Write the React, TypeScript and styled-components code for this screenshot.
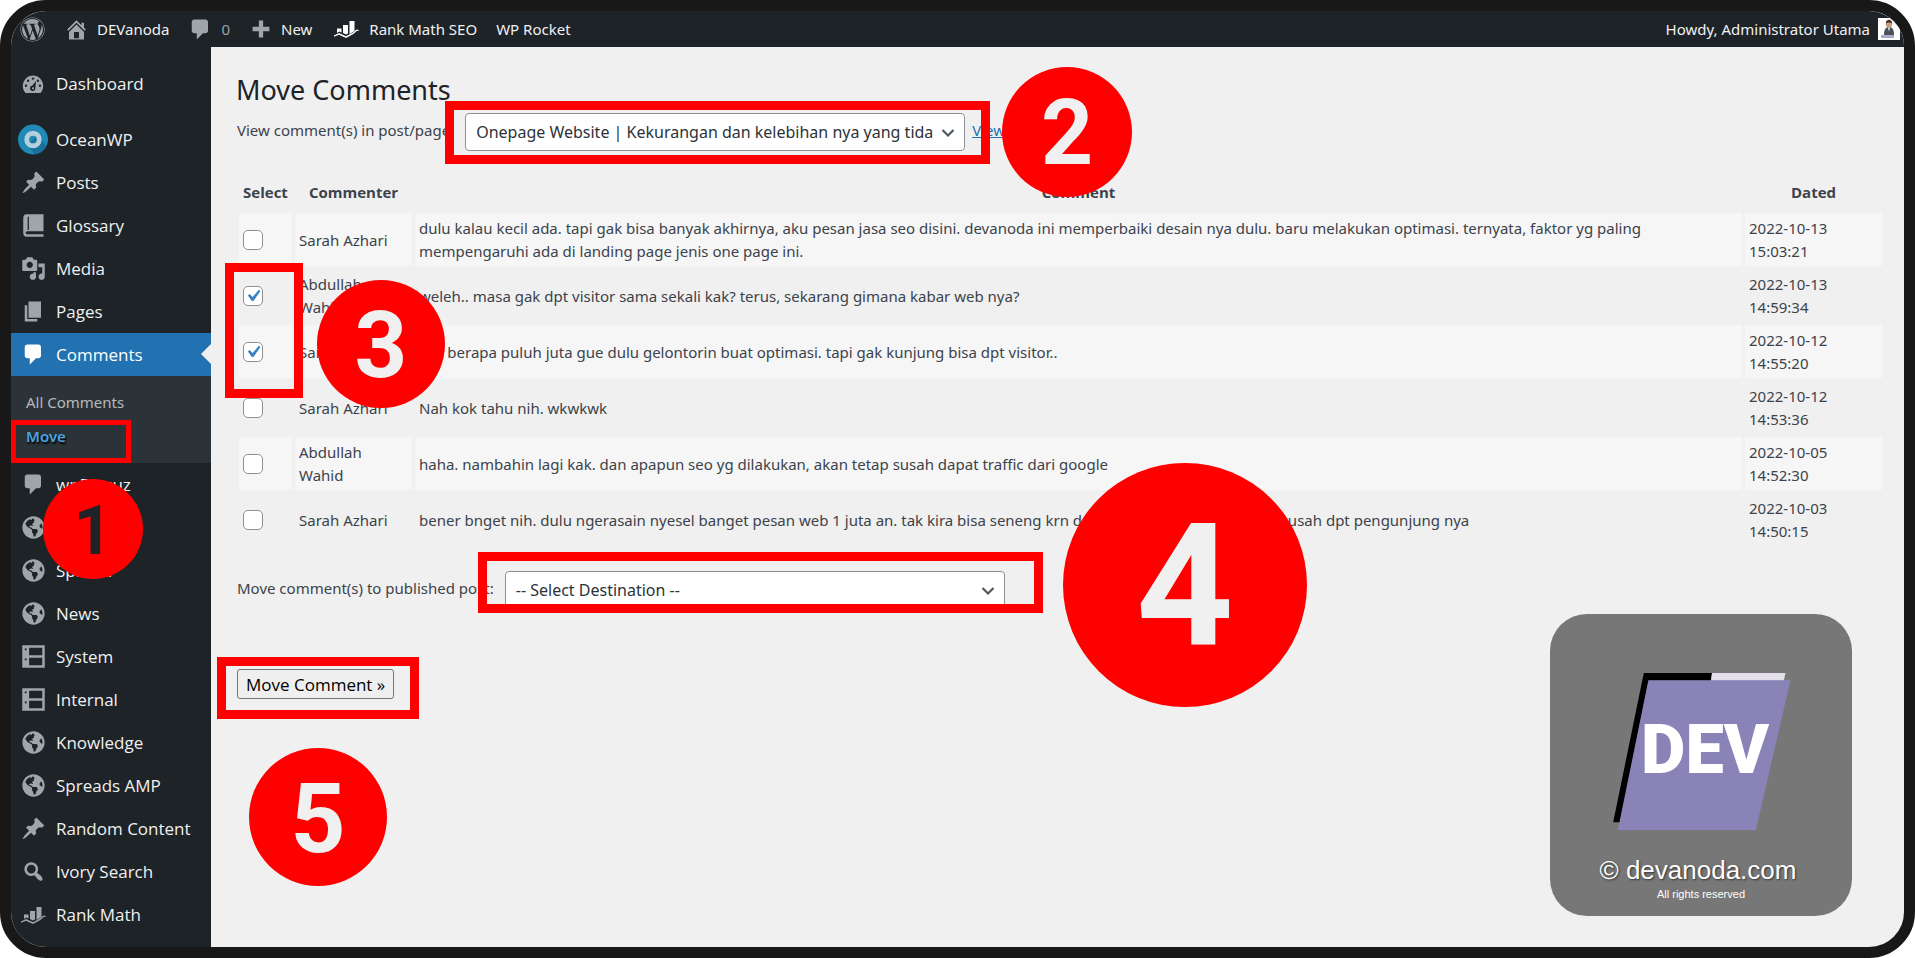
import React, { useState, type ReactNode } from 'react';
import styled, { createGlobalStyle, css } from 'styled-components';
import { FaGlobeAmericas, FaWordpress } from 'react-icons/fa';

const red = '#fe0000';
const ink = '#1d2327';
const canvas = '#f0f0f1';

const GlobalStyle = createGlobalStyle`
  *, *::before, *::after { box-sizing: border-box; }
  body {
    margin: 0;
    background: #fff;
    color: #3c434a;
    font: 15px/23px 'Noto Sans', 'Open Sans', sans-serif;
  }
  h1, p, ul { margin: 0; padding: 0; }
  ul { list-style: none; }
  a { text-decoration: none; color: inherit; }
`;

/* ---------- frame and regions ---------- */

const Frame = styled.div`
  display: flex;
  flex-direction: column;
  min-height: 100vh;
  border: 11px solid #181818;
  border-radius: 46px;
  overflow: hidden;
  background: ${canvas};
`;

const AdminBar = styled.header`
  display: flex;
  align-items: center;
  justify-content: space-between;
  height: 36px;
  padding: 0 4px 0 9px;
  background: ${ink};
  color: #f0f0f1;
`;

const BarGroup = styled.nav`
  display: flex;
  align-items: center;
  gap: 19px;
`;

const BarLink = styled.a<{ $dim?: boolean }>`
  display: flex;
  align-items: center;
  gap: 8px;
  white-space: nowrap;
  color: ${(p) => (p.$dim ? '#9ca2a7' : '#f0f0f1')};
`;

const BarIcon = styled.span`
  display: flex;
  color: #a0a5aa;
`;

const Body = styled.div`
  display: flex;
  flex: 1;
`;

const Sidebar = styled.nav`
  flex: 0 0 200px;
  padding-top: 15px;
  background: ${ink};
`;

const MenuItem = styled.li<{ $spaced?: boolean }>`
  margin-bottom: ${(p) => (p.$spaced ? '13px' : '0')};
`;

const MenuLink = styled.a<{ $current?: boolean }>`
  position: relative;
  display: flex;
  align-items: center;
  height: 43px;
  padding-left: 7px;
  gap: 8px;
  color: ${(p) => (p.$current ? '#fff' : '#f0f0f1')};
  font-family: 'Open Sans', 'Noto Sans', sans-serif;
  font-size: 17px;
  ${(p) =>
    p.$current &&
    css`
      background: #2271b1;
      &::after {
        content: '';
        position: absolute;
        right: 0;
        top: 11px;
        border: 10px solid transparent;
        border-left-width: 0;
        border-right-color: ${canvas};
      }
    `}
`;

const IconSlot = styled.span<{ $bright?: boolean }>`
  display: flex;
  align-items: center;
  justify-content: center;
  width: 30px;
  color: ${(p) => (p.$bright ? '#fff' : '#a0a5aa')};
`;

const Submenu = styled.ul`
  padding: 9px 0 10px;
  background: #2c3338;
`;

const SubItem = styled.li`
  position: relative;
`;

const SubLink = styled.a<{ $current?: boolean }>`
  display: block;
  height: 34px;
  padding-left: 15px;
  line-height: 34px;
  color: ${(p) => (p.$current ? '#4aa3e0' : '#b5babf')};
  font-weight: ${(p) => (p.$current ? 600 : 400)};
  text-shadow: ${(p) => (p.$current ? '1px 2px 2px #000' : 'none')};
`;

const Main = styled.main`
  position: relative;
  flex: 1;
  min-width: 0;
  padding: 25px 19px 40px 25px;
`;

/* ---------- page content ---------- */

const Title = styled.h1`
  margin-bottom: 5px;
  color: ${ink};
  font-size: 27px;
  font-weight: 400;
  line-height: 36px;
`;

const FieldRow = styled.div<{ $top?: number }>`
  display: flex;
  align-items: center;
  gap: 11px;
  margin-top: ${(p) => p.$top ?? 0}px;
`;

const FieldLabel = styled.label`
  padding: 0 0 3px 1px;
`;

const Anchor = styled.div`
  position: relative;
  width: fit-content;
`;

const Select = styled.select`
  display: block;
  width: 500px;
  height: 38px;
  padding: 0 30px 0 10px;
  border: 1px solid #8c8f94;
  border-radius: 4px;
  background: #fff;
  color: #2c3338;
  font: 16px 'Noto Sans', 'Open Sans', sans-serif;
  appearance: none;
`;

const Chevron = styled.svg`
  position: absolute;
  right: 9px;
  top: 12px;
  width: 16px;
  height: 16px;
  pointer-events: none;
`;

const TextLink = styled.a`
  padding-bottom: 3px;
  margin-left: -4px;
  color: #2271b1;
  text-decoration: underline;
`;

const Table = styled.table`
  width: 100%;
  margin-top: 20px;
  border-spacing: 3px;
  table-layout: fixed;
`;

const HeadCell = styled.th<{ $width?: number }>`
  width: ${(p) => (p.$width ? `${p.$width}px` : 'auto')};
  height: 36px;
  padding: 0 4px;
  font-family: 'Open Sans', 'Noto Sans', sans-serif;
  font-weight: 700;
`;

const Row = styled.tr`
  &:nth-child(odd) > td { background: #f6f6f7; }
`;

const Cell = styled.td`
  position: relative;
  height: 53px;
  padding: 4px 4px 3px;
  vertical-align: middle;
`;

const Checkbox = styled.input`
  display: block;
  width: 20px;
  height: 20px;
  margin: 0;
  border: 1px solid #8c8f94;
  border-radius: 5px;
  background: #fff center / 24px no-repeat;
  appearance: none;
  &:checked {
    background-image: url("data:image/svg+xml;utf8,<svg xmlns='http://www.w3.org/2000/svg' viewBox='0 0 20 20'><path d='M14.83 4.89l1.34.94-5.81 8.38H9.02L5.78 9.67l1.34-1.25 2.57 2.4z' fill='%233582c4'/></svg>");
  }
`;

const SubmitArea = styled(Anchor)`
  margin-top: 60px;
`;

const Submit = styled.button`
  display: block;
  height: 30px;
  margin-left: 1px;
  padding: 0 8px;
  border: 1px solid #767676;
  border-radius: 3px;
  background: #efefef;
  color: #000;
  font: 17px 'Open Sans', 'Noto Sans', sans-serif;
  white-space: nowrap;
`;

/* ---------- tutorial marks ---------- */

interface Place {
  $x: number;
  $y: number;
}

const Ring = styled.span<Place & { $w: number; $h: number; $line?: number }>`
  position: absolute;
  z-index: 2;
  left: ${(p) => p.$x}px;
  top: ${(p) => p.$y}px;
  width: ${(p) => p.$w}px;
  height: ${(p) => p.$h}px;
  border: ${(p) => p.$line ?? 9}px solid ${red};
  pointer-events: none;
`;

const Step = styled.span<Place & { $size: number; $text: number; $ink?: string }>`
  position: absolute;
  z-index: 3;
  left: ${(p) => p.$x}px;
  top: ${(p) => p.$y}px;
  display: flex;
  align-items: center;
  justify-content: center;
  width: ${(p) => p.$size}px;
  height: ${(p) => p.$size}px;
  padding-top: 3px;
  border-radius: 50%;
  background: ${red};
  color: ${(p) => p.$ink ?? canvas};
  font: 700 ${(p) => p.$text}px/1 Roboto, sans-serif;
  pointer-events: none;
`;

/* ---------- copyright card ---------- */

const Card = styled.aside`
  position: absolute;
  right: 52px;
  bottom: 31px;
  display: flex;
  flex-direction: column;
  align-items: center;
  width: 302px;
  height: 302px;
  padding-top: 59px;
  border-radius: 37px;
  background: #777;
  color: #fff;
  font-family: 'Liberation Sans', sans-serif;
`;

const Emblem = styled.svg`
  width: 178px;
  height: 157px;
  margin: 0 0 26px 2px;
`;

const Owner = styled.p`
  padding-right: 6px;
  font-size: 26px;
  line-height: 28px;
  text-shadow: 1px 1px 2px #333;
`;

const Rights = styled.p`
  font-size: 11px;
  line-height: 20px;
`;

/* ---------- icons ---------- */

const Glyph = ({ size = 25, children }: { size?: number; children: ReactNode }) => (
  <svg width={size} height={size} viewBox="0 0 20 20" fill="currentColor" aria-hidden="true">
    {children}
  </svg>
);

const DashboardIcon = () => (
  <Glyph size={24}>
    <path d="M3.8 17.5h12.4c1.5-1.6 2.3-3.6 2.3-5.8C18.500 7 14.700 3 10 3s-8.500 4-8.500 8.700c0 2.200.8 4.200 2.300 5.800z" />
    <g fill={ink}>
      <circle cx="10" cy="5.500" r="1" />
      <circle cx="5.900" cy="7.300" r="1" />
      <circle cx="14.100" cy="7.300" r="1" />
      <circle cx="4.200" cy="11.500" r="1" />
      <circle cx="15.800" cy="11.500" r="1" />
      <path d="M12.600 7.600L11.900 13.400a2.200 2.200 0 1 1-2.600-1.900z" />
    </g>
    <circle cx="10" cy="13.600" r="0.900" />
  </Glyph>
);

const OceanIcon = () => (
  <svg width="31" height="31" viewBox="0 0 31 31" aria-hidden="true">
    <circle cx="15.500" cy="15.500" r="15.500" fill="#2089b5" />
    <path d="M21 10l8 12a15.500 15.500 0 0 1-12 9l-7-10z" fill="#19709a" />
    <circle cx="15.500" cy="15.500" r="6.500" fill="none" stroke="#b3cfdc" strokeWidth="5" />
  </svg>
);

const PinIcon = () => (
  <Glyph>
    <path d="M10.440 3.020l1.820-1.820 6.360 6.350-1.830 1.820c-1.050-.68-2.480-.57-3.410.36l-.75.75c-.92.93-1.040 2.350-.35 3.410l-1.830 1.820-2.410-2.410-2.800 2.790c-.42.42-3.380 2.710-3.800 2.290s1.860-3.390 2.280-3.810l2.790-2.790L4.100 9.360l1.830-1.820c1.050.69 2.480.57 3.400-.36l.75-.75c.93-.92 1.050-2.350.36-3.410z" />
  </Glyph>
);

const BookIcon = () => (
  <Glyph>
    <path fillRule="evenodd" d="M4.500 1H18v13.500H5a1.200 1.200 0 0 0 0 2.500h13v2H4.500A3 3 0 0 1 1.800 16V4a3 3 0 0 1 2.700-3zM5.300 3v10.500h1V3z" />
  </Glyph>
);

const MediaIcon = () => (
  <Glyph>
    <path d="M13 11V4c0-.55-.45-1-1-1h-1.670L9 1H5L3.670 3H2c-.55 0-1 .45-1 1v7c0 .55.45 1 1 1h10c.55 0 1-.45 1-1zM7 4.500c1.380 0 2.500 1.120 2.500 2.500S8.380 9.500 7 9.500 4.500 8.380 4.500 7 5.620 4.500 7 4.500zM14 6h5v10.500c0 1.380-1.120 2.500-2.500 2.500S14 17.880 14 16.500s1.120-2.500 2.500-2.500c.17 0 .34.02.5.05V9h-3V6zm-4 8.050V13h2v3.500c0 1.380-1.120 2.500-2.500 2.500S7 17.880 7 16.500 8.120 14 9.500 14c.17 0 .34.02.5.05z" />
  </Glyph>
);

const PagesIcon = () => (
  <Glyph>
    <path d="M6 15V2h10v13H6zm-1 1h8v2H3V5h2v11z" />
  </Glyph>
);

const CommentIcon = () => (
  <Glyph>
    <path d="M5 2h9c1.100 0 2 .9 2 2v7c0 1.100-.9 2-2 2h-2l-5 5v-5H5c-1.100 0-2-.9-2-2V4c0-1.100.9-2 2-2z" />
  </Glyph>
);

const HomeIcon = () => (
  <Glyph>
    <path d="M16 8.500l1.530 1.530-1.060 1.060L10 4.600l-6.470 6.490-1.060-1.060L10 2.500l4 4v-2h2v4zm-6-2.460l6 5.990V18H4v-5.970zM12 17v-5H8v5h4z" />
  </Glyph>
);

const PlusIcon = () => (
  <Glyph size={24}>
    <path d="M8.200 3h3.600v5.200H17v3.600h-5.200V17H8.200v-5.200H3V8.200h5.200z" />
  </Glyph>
);

const ListIcon = () => (
  <Glyph>
    <path fillRule="evenodd" d="M1 1h18v18H1zM6.500 3v6H17V3zM6.500 11v6H17v-6zM3 3.500V5h1.500V3.500zM3 11.500V13h1.500v-1.500z" />
  </Glyph>
);

const SearchIcon = () => (
  <Glyph>
    <path d="M12.140 4.180c1.870 1.870 2.110 4.750.72 6.890.12.1.22.21.36.31.2.16.47.36.81.59.34.24.56.39.66.47.42.31.73.57.94.78.32.32.6.65.84 1 .25.35.44.69.59 1.040.14.35.21.68.18 1-.02.32-.14.59-.36.81s-.49.34-.81.36c-.31.02-.65-.04-.99-.19-.35-.14-.7-.34-1.040-.59-.35-.24-.68-.52-1-.84-.21-.21-.47-.52-.77-.93-.1-.13-.25-.35-.47-.66-.22-.32-.4-.57-.56-.78-.16-.2-.29-.35-.44-.5-2.070 1.090-4.690.76-6.440-.98-2.140-2.150-2.140-5.640 0-7.780 2.150-2.150 5.630-2.150 7.780 0zm-1.410 6.360c1.360-1.370 1.360-3.580 0-4.950-1.370-1.370-3.590-1.370-4.950 0-1.370 1.370-1.370 3.580 0 4.950 1.360 1.370 3.580 1.370 4.950 0z" />
  </Glyph>
);

const RankIcon = () => (
  <svg width="25" height="18" viewBox="0 0 25 18" fill="currentColor" aria-hidden="true">
    <path d="M3 8.500h4.500v4L5.200 11.500 3 13zM9 5h5v8.500l-2 1L9 13zM15.500 1h5v10l-5 3z" />
    <path d="M0 15.500l5-2.500 7 3.200 7-3.700 3.500-3 2.500.5-.9 1-1.100-.2-3.600 3.300L12 18l-7-3.200-5 2z" />
  </svg>
);

const GlobeIcon = () => <FaGlobeAmericas size={23} aria-hidden="true" />;

const Avatar = () => (
  <svg width="22" height="22" viewBox="0 0 22 22" role="img" aria-label="Administrator Utama">
    <rect width="22" height="22" fill="#fff" />
    <path d="M6 17c0-6 2-8 5-8s5 2 5 8z" fill="#4c5058" />
    <circle cx="11" cy="6" r="3.200" fill="#c79a82" />
    <path d="M7.800 5.500c0-5 6.400-5 6.400 0-2-1.500-4-1.500-6.400 0z" fill="#4a2c20" />
    <path d="M10 9.500h2l-1 4z" fill="#fff" />
    <rect x="3" y="17" width="13" height="3" fill="#a9acc6" />
  </svg>
);

/* ---------- data ---------- */

interface MenuEntry {
  label: string;
  icon: ReactNode;
  spaced?: boolean;
  current?: boolean;
}

const menu: MenuEntry[] = [
  { label: 'Dashboard', icon: <DashboardIcon />, spaced: true },
  { label: 'OceanWP', icon: <OceanIcon /> },
  { label: 'Posts', icon: <PinIcon /> },
  { label: 'Glossary', icon: <BookIcon /> },
  { label: 'Media', icon: <MediaIcon /> },
  { label: 'Pages', icon: <PagesIcon /> },
  { label: 'Comments', icon: <CommentIcon />, current: true },
  { label: 'wpDiscuz', icon: <CommentIcon /> },
  { label: 'Iklan', icon: <GlobeIcon /> },
  { label: 'Spread', icon: <GlobeIcon /> },
  { label: 'News', icon: <GlobeIcon /> },
  { label: 'System', icon: <ListIcon /> },
  { label: 'Internal', icon: <ListIcon /> },
  { label: 'Knowledge', icon: <GlobeIcon /> },
  { label: 'Spreads AMP', icon: <GlobeIcon /> },
  { label: 'Random Content', icon: <PinIcon /> },
  { label: 'Ivory Search', icon: <SearchIcon /> },
  { label: 'Rank Math', icon: <RankIcon /> },
];

const comments = [
  {
    by: 'Sarah Azhari',
    text: 'dulu kalau kecil ada. tapi gak bisa banyak akhirnya, aku pesan jasa seo disini. devanoda ini memperbaiki desain nya dulu. baru melakukan optimasi. ternyata, faktor yg paling mempengaruhi ada di landing page jenis one page ini.',
    date: '2022-10-13 15:03:21',
    picked: false,
  },
  {
    by: 'Abdullah Wahid',
    text: 'weleh.. masa gak dpt visitor sama sekali kak? terus, sekarang gimana kabar web nya?',
    date: '2022-10-13 14:59:34',
    picked: true,
  },
  {
    by: 'Sarah Azhari',
    text: 'kak berapa puluh juta gue dulu gelontorin buat optimasi. tapi gak kunjung bisa dpt visitor..',
    date: '2022-10-12 14:55:20',
    picked: true,
  },
  { by: 'Sarah Azhari', text: 'Nah kok tahu nih. wkwkwk', date: '2022-10-12 14:53:36', picked: false },
  {
    by: 'Abdullah Wahid',
    text: 'haha. nambahin lagi kak. dan apapun seo yg dilakukan, akan tetap susah dapat traffic dari google',
    date: '2022-10-05 14:52:30',
    picked: false,
  },
  {
    by: 'Sarah Azhari',
    text: 'bener bnget nih. dulu ngerasain nyesel banget pesan web 1 juta an. tak kira bisa seneng krn dapet harga murah, ternyata susah dpt pengunjung nya',
    date: '2022-10-03 14:50:15',
    picked: false,
  },
];

const SelectArrow = () => (
  <Chevron viewBox="0 0 16 16" fill="none" stroke="#50575e" strokeWidth="2.200" aria-hidden="true">
    <path d="M2.500 5l5.500 5.500L13.500 5" />
  </Chevron>
);

export default function App() {
  const [picked, setPicked] = useState(comments.map((c) => c.picked));
  const toggle = (index: number) => setPicked(picked.map((v, i) => (i === index ? !v : v)));

  return (
    <>
      <GlobalStyle />
      <Frame>
        <AdminBar>
          <BarGroup aria-label="Toolbar">
            <BarLink href="#" $dim aria-label="About WordPress"><FaWordpress size={25} /></BarLink>
            <BarLink href="#"><BarIcon><HomeIcon /></BarIcon>DEVanoda</BarLink>
            <BarLink href="#" $dim><BarIcon><CommentIcon /></BarIcon>0</BarLink>
            <BarLink href="#"><BarIcon><PlusIcon /></BarIcon>New</BarLink>
            <BarLink href="#"><IconSlot $bright><RankIcon /></IconSlot>Rank Math SEO</BarLink>
            <BarLink href="#">WP Rocket</BarLink>
          </BarGroup>
          <BarLink href="#">Howdy, Administrator Utama<Avatar /></BarLink>
        </AdminBar>
        <Body>
          <Sidebar aria-label="Main menu">
            <ul>
              {menu.map((item) => (
                <MenuItem key={item.label} $spaced={item.spaced}>
                  <MenuLink href="#" $current={item.current}>
                    <IconSlot $bright={item.current}>{item.icon}</IconSlot>
                    {item.label}
                  </MenuLink>
                  {item.current && (
                    <Submenu>
                      <SubItem><SubLink href="#">All Comments</SubLink></SubItem>
                      <SubItem>
                        <SubLink href="#" $current>Move</SubLink>
                        <Ring $x={0} $y={1} $w={120} $h={43} $line={5} />
                        <Step $x={32} $y={60} $size={100} $text={68} $ink={ink}>1</Step>
                      </SubItem>
                    </Submenu>
                  )}
                </MenuItem>
              ))}
            </ul>
          </Sidebar>
          <Main>
            <Title>Move Comments</Title>
            <FieldRow>
              <FieldLabel htmlFor="source">View comment(s) in post/page:</FieldLabel>
              <Anchor>
                <Select id="source">
                  <option>Onepage Website | Kekurangan dan kelebihan nya yang tidak diketahui</option>
                </Select>
                <SelectArrow />
                <Ring $x={-20} $y={-12} $w={545} $h={63} />
                <Step $x={537} $y={-46} $size={130} $text={91}>2</Step>
              </Anchor>
              <TextLink href="#">View</TextLink>
            </FieldRow>
            <Table>
              <thead>
                <tr>
                  <HeadCell $width={53}>Select</HeadCell>
                  <HeadCell $width={117}>Commenter</HeadCell>
                  <HeadCell>Comment</HeadCell>
                  <HeadCell $width={137}>Dated</HeadCell>
                </tr>
              </thead>
              <tbody>
                {comments.map((c, i) => (
                  <Row key={c.date}>
                    <Cell>
                      <Checkbox
                        type="checkbox"
                        aria-label={`Select comment by ${c.by}, ${c.date}`}
                        checked={picked[i]}
                        onChange={() => toggle(i)}
                      />
                      {i === 1 && (
                        <>
                          <Ring $x={-14} $y={-6} $w={78} $h={135} />
                          <Step $x={78} $y={11} $size={128} $text={92}>3</Step>
                        </>
                      )}
                    </Cell>
                    <Cell>{c.by}</Cell>
                    <Cell>{c.text}</Cell>
                    <Cell>{c.date}</Cell>
                  </Row>
                ))}
              </tbody>
            </Table>
            <FieldRow $top={22}>
              <FieldLabel htmlFor="target">Move comment(s) to published post:</FieldLabel>
              <Anchor>
                <Select id="target">
                  <option>-- Select Destination --</option>
                </Select>
                <SelectArrow />
                <Ring $x={-27} $y={-19} $w={565} $h={61} />
                <Step $x={558} $y={-108} $size={244} $text={170}>4</Step>
              </Anchor>
            </FieldRow>
            <SubmitArea>
              <Submit type="button">Move Comment »</Submit>
              <Ring $x={-19} $y={-12} $w={202} $h={62} />
              <Step $x={13} $y={79} $size={138} $text={96}>5</Step>
            </SubmitArea>
            <Card>
              <Emblem viewBox="219 219 534 472" role="img" aria-label="DEV">
                <path d="M311 219H516L513 242H325L240 668H219z" fill="#000" />
                <path d="M516 219H737L732 242H513z" fill="#e3dfea" />
                <path d="M325 241H752L648 691H233z" fill="#8983b8" />
                <text x="303" y="521" fill="#fff" fontFamily="Roboto, sans-serif" fontWeight="900" fontSize="206">DEV</text>
              </Emblem>
              <Owner>© devanoda.com</Owner>
              <Rights>All rights reserved</Rights>
            </Card>
          </Main>
        </Body>
      </Frame>
    </>
  );
}
